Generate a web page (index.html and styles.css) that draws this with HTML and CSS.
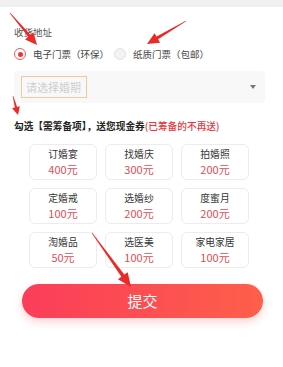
FILE: index.html
```html
<!DOCTYPE html>
<html lang="zh">
<head>
<meta charset="utf-8">
<link rel="stylesheet" href="styles.css">
</head>
<body>
<div class="topbar"></div>
<div class="panel">
  <div class="label">收货地址</div>
  <div class="radios">
    <span class="radio on"></span><span class="rtext">电子门票（环保）</span>
    <span class="radio"></span><span class="rtext">纸质门票（包邮）</span>
  </div>
  <div class="select">
    <div class="datebox">请选择婚期</div>
    <span class="caret"></span>
  </div>
  <div class="title">勾选【需筹备项】，送您现金券<span class="red">(已筹备的不再送)</span></div>
  <div class="grid">
    <div class="card"><span class="name">订婚宴</span><span class="price">400元</span></div>
    <div class="card"><span class="name">找婚庆</span><span class="price">300元</span></div>
    <div class="card"><span class="name">拍婚照</span><span class="price">200元</span></div>
    <div class="card"><span class="name">定婚戒</span><span class="price">100元</span></div>
    <div class="card"><span class="name">选婚纱</span><span class="price">200元</span></div>
    <div class="card"><span class="name">度蜜月</span><span class="price">200元</span></div>
    <div class="card"><span class="name">淘婚品</span><span class="price">50元</span></div>
    <div class="card"><span class="name">选医美</span><span class="price">100元</span></div>
    <div class="card"><span class="name">家电家居</span><span class="price">100元</span></div>
  </div>
  <div class="submit">提交</div>
</div>
<svg class="arrows" width="283" height="367" viewBox="0 0 283 367">
  <polygon points="10.23,12.81 30.41,34.86 33.46,32.28 37,45 25.06,39.38 28.11,36.80 9.77,13.19"/>
  <polygon points="186.15,21.26 158.09,39.19 160.12,42.64 147,44 154.54,33.16 156.57,36.61 185.85,20.74"/>
  <polygon points="13.29,95.92 17.13,106.96 19.84,106.24 18,115 12.10,108.28 14.81,107.56 12.71,96.08"/>
  <polygon points="92.24,232.82 124.27,274.60 127.68,272.14 131,287 117.94,279.16 121.35,276.70 91.76,233.18"/>
</svg>
</body>
</html>
```
FILE: styles.css
```css
html, body {
  margin: 0;
  padding: 0;
}
body {
  width: 283px;
  height: 367px;
  overflow: hidden;
  background: #fff;
  font-family: "Noto Sans CJK SC", "Noto Sans", sans-serif;
  position: relative;
}
.topbar {
  height: 7px;
  background: #f0f0f0;
}
.panel {
  width: 269px;
  background: #fff;
  padding: 0 0 20px 14px;
  border-right: 1px solid #f8f8f8;
  overflow: hidden;
}
.label {
  margin-top: 19px;
  font-size: 9.5px;
  line-height: 12px;
  color: #555;
}
.radios {
  margin-top: 9px;
  height: 14px;
  display: flex;
  align-items: center;
}
.radio {
  width: 12px;
  height: 12px;
  box-sizing: border-box;
  border-radius: 50%;
  border: 1px solid #e2e2e2;
  background: #f3f3f3;
  margin-right: 7px;
  position: relative;
}
.radio.on {
  border-color: #f25a5a;
  background: #fff;
}
.radio.on::after {
  content: "";
  position: absolute;
  left: 2.5px;
  top: 2.5px;
  width: 5px;
  height: 5px;
  border-radius: 50%;
  background: #ee3434;
}
.rtext {
  font-size: 9.5px;
  color: #444;
  margin-right: 5px;
}
.select {
  margin-top: 10px;
  width: 251px;
  height: 32px;
  box-sizing: border-box;
  background: #f8f8f8;
  border-radius: 4px;
  display: flex;
  align-items: center;
  padding: 0 9px 0 7px;
}
.datebox {
  width: 66px;
  height: 22px;
  box-sizing: border-box;
  border: 1px solid #efc89e;
  font-size: 11px;
  line-height: 20px;
  color: #cfcfcf;
  padding-left: 4px;
}
.caret {
  margin-left: auto;
  width: 0;
  height: 0;
  border-left: 3.5px solid transparent;
  border-right: 3.5px solid transparent;
  border-top: 4px solid #777;
}
.title {
  margin-top: 16px;
  font-size: 9.7px;
  line-height: 14px;
  font-weight: bold;
  color: #222;
  white-space: nowrap;
}
.title .red {
  color: #e8353c;
  font-weight: 500;
}
.grid {
  margin-top: 11px;
  padding-left: 15px;
  display: grid;
  grid-template-columns: repeat(3, 68px);
  grid-auto-rows: 36px;
  gap: 8px;
}
.card {
  box-sizing: border-box;
  border: 1px solid #ececec;
  border-radius: 6px;
  background: #fff;
  display: flex;
  flex-direction: column;
  align-items: center;
  padding-top: 3px;
}
.name {
  font-size: 9.8px;
  line-height: 12px;
  color: #333;
}
.price {
  margin-top: 2px;
  font-size: 11px;
  line-height: 14px;
  color: #e24c55;
}
.submit {
  margin: 16px 0 0 8px;
  width: 241px;
  height: 34px;
  border-radius: 17px;
  background: linear-gradient(90deg, #fb3d5a, #fe5f4a);
  box-shadow: 0 4px 8px rgba(250, 80, 80, 0.25);
  color: #fff;
  font-size: 15px;
  line-height: 34px;
  text-align: center;
}
.arrows {
  position: absolute;
  left: 0;
  top: 0;
  pointer-events: none;
}
.arrows polygon {
  fill: #ec2a2a;
}
```
